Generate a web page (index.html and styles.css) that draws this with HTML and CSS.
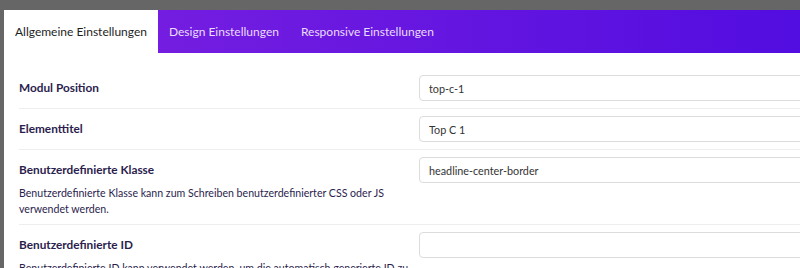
FILE: index.html
```html
<!DOCTYPE html>
<html lang="de">
<head>
  <meta charset="UTF-8">
  <title>Modul Einstellungen</title>
  <link rel="stylesheet" href="styles.css">
</head>
<body>
  <div class="panel">
    <div class="tabs">
      <div class="tab active">Allgemeine Einstellungen</div>
      <div class="tab">Design Einstellungen</div>
      <div class="tab">Responsive Einstellungen</div>
    </div>

    <form class="settings">
      <div class="row">
        <div class="info">
          <label for="position">Modul Position</label>
        </div>
        <input type="text" id="position" value="top-c-1" />
      </div>

      <div class="row">
        <div class="info">
          <label for="title">Elementtitel</label>
        </div>
        <input type="text" id="title" value="Top C 1" />
      </div>

      <div class="row">
        <div class="info">
          <label for="klasse">Benutzerdefinierte Klasse</label>
          <p>Benutzerdefinierte Klasse kann zum Schreiben benutzerdefinierter CSS oder JS verwendet werden.</p>
        </div>
        <input type="text" id="klasse" value="headline-center-border" />
      </div>

      <div class="row">
        <div class="info">
          <label for="customid">Benutzerdefinierte ID</label>
          <p>Benutzerdefinierte ID kann verwendet werden, um die automatisch generierte ID zu überschreiben.</p>
        </div>
        <input type="text" id="customid" value="" />
      </div>
    </form>
  </div>
</body>
</html>
```

FILE: styles.css
```css
html, body { margin: 0; height: 100%; overflow: hidden; }
body { background: #666; font-family: Lato, "Open Sans", sans-serif; }
.panel { margin: 10px 0 0 4px; background: #fff; height: 100%; overflow: hidden; }
.tabs { display: flex; height: 43px; background: linear-gradient(90deg, #7c21e0, #520de0); }
.tab { padding: 0 11px; line-height: 43px; font-size: 12px; color: #eadcff; white-space: nowrap; }
.tab.active { background: #fff; color: #1e1e1e; }
.settings { padding: 15px 0 0 15px; }
.row { display: grid; grid-template-columns: 400px 420px; align-items: start; padding: 7px 0; border-bottom: 1px solid #eeeef0; }
.info label { display: block; line-height: 26px; font-size: 11.8px; font-weight: 700; color: #2b1d4d; }
.info p { margin: 2px 0 0; font-size: 10.6px; line-height: 16px; color: #2b1d4d; width: 396px; }
.row input { height: 26px; box-sizing: border-box; border: 1px solid #dcdcdc; border-radius: 4px; padding: 0 9px; font-family: inherit; font-size: 10.8px; color: #333; }
```
